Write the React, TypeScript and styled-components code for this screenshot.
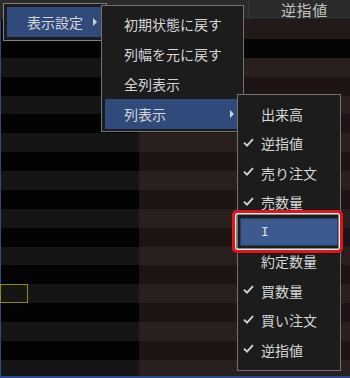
import styled, { createGlobalStyle } from "styled-components";

const GlobalStyle = createGlobalStyle`
  html, body {
    margin: 0;
    padding: 0;
    background: #000;
  }
  body {
    font-family: "Noto Sans CJK JP", "Noto Sans", sans-serif;
  }
`;

type Tone = "header" | "first" | "black" | "dark" | "light";

const ROW_COUNT = 19;

function rowTone(index: number): Tone {
  if (index === 0) return "first";
  if (index === 1) return "black";
  return index % 2 === 0 ? "light" : "dark";
}

const leftColors: Record<Tone, string> = {
  header: "#2b2b2b",
  first: "#0b0b0b",
  black: "#030303",
  dark: "#030303",
  light: "#151515",
};

const rightColors: Record<Tone, string> = {
  header: "#2b2b2b",
  first: "#221a19",
  black: "#050505",
  dark: "#1d1514",
  light: "#29201e",
};

const submenuItems = [
  { label: "出来高", checked: false },
  { label: "逆指値", checked: true },
  { label: "売り注文", checked: true },
  { label: "売数量", checked: true },
  { label: "I", checked: false, active: true },
  { label: "約定数量", checked: false },
  { label: "買数量", checked: true },
  { label: "買い注文", checked: true },
  { label: "逆指値", checked: true },
];

export default function App() {
  return (
    <>
      <GlobalStyle />
      <Screen>
        <HeaderRow>
          <HeaderCell $width={249} />
          <HeaderCell $width={101}>逆指値</HeaderCell>
        </HeaderRow>
        <Body>
          {Array.from({ length: ROW_COUNT }).map((_, i) => (
            <GridRow key={i}>
              <LeftCell $tone={rowTone(i)} />
              <RightCell $tone={rowTone(i)} />
            </GridRow>
          ))}
        </Body>

        <FocusCell />

        <RootMenu>
          <MenuItem $height={30} $active $indent={20}>
            <span>表示設定</span>
            <Arrow />
          </MenuItem>
        </RootMenu>

        <SettingsMenu>
          <MenuItem $height={30} $indent={19}>初期状態に戻す</MenuItem>
          <MenuItem $height={30} $indent={19}>列幅を元に戻す</MenuItem>
          <MenuItem $height={30} $indent={19}>全列表示</MenuItem>
          <MenuItem $height={30} $indent={19} $active>
            <span>列表示</span>
            <Arrow />
          </MenuItem>
        </SettingsMenu>

        <ColumnMenu>
          {submenuItems.map((item, i) => (
            <ColumnItem key={i} $active={item.active}>
              <CheckSlot>
                {item.checked && (
                  <svg width="11" height="9" viewBox="0 0 11 9">
                    <polyline
                      points="1,4.6 4,7.6 10,1.2"
                      fill="none"
                      stroke="#d2d2d2"
                      strokeWidth="1.9"
                    />
                  </svg>
                )}
              </CheckSlot>
              {item.active ? <CursorGlyph>{item.label}</CursorGlyph> : item.label}
            </ColumnItem>
          ))}
        </ColumnMenu>

        <Callout />
      </Screen>
    </>
  );
}

const Screen = styled.div`
  position: relative;
  width: 350px;
  height: 378px;
  overflow: hidden;
  display: flex;
  flex-direction: column;
  background: #000;
`;

const HeaderRow = styled.div`
  display: flex;
  height: 20px;
  flex-shrink: 0;
  background: #2b2b2b;
  border-bottom: 1px solid #1a1a1a;
  box-sizing: border-box;
`;

const HeaderCell = styled.div<{ $width: number }>`
  width: ${(p) => p.$width}px;
  flex-shrink: 0;
  border-right: 1px solid #3a3a3a;
  box-sizing: border-box;
  color: #c4c4c4;
  font-size: 15px;
  letter-spacing: 0.6px;
  line-height: 19px;
  padding-left: 32px;
  &:last-child {
    border-right: none;
  }
`;

const Body = styled.div`
  flex: 1;
  overflow: hidden;
  border-left: 1px solid #2b4c8a;
  border-bottom: 2px solid #2b4c8a;
`;

const GridRow = styled.div`
  display: grid;
  grid-template-columns: 138px 1fr;
  height: 18.875px;
`;

const LeftCell = styled.div<{ $tone: Tone }>`
  background: ${(p) => leftColors[p.$tone]};
`;

const RightCell = styled.div<{ $tone: Tone }>`
  background: ${(p) => rightColors[p.$tone]};
`;

const FocusCell = styled.div`
  position: absolute;
  left: 0;
  top: 284px;
  width: 28px;
  height: 19px;
  box-sizing: border-box;
  border: 1.5px solid #8c8c0c;
`;

const MenuPanel = styled.div`
  position: absolute;
  box-sizing: border-box;
  background: #1c1c1c;
  border: 1px solid #727272;
  color: #d6d6d6;
  font-size: 14px;
  display: flex;
  flex-direction: column;
`;

const RootMenu = styled(MenuPanel)`
  left: 3px;
  top: 3px;
  width: 104px;
  height: 38px;
  padding: 3px;
  border-color: #808080;
  z-index: 1;
`;

const SettingsMenu = styled(MenuPanel)`
  left: 101px;
  top: 5px;
  width: 143px;
  height: 127px;
  padding: 3px 3px 2px;
  z-index: 2;
`;

const ColumnMenu = styled(MenuPanel)`
  left: 237px;
  top: 94px;
  width: 104px;
  height: 277px;
  padding: 4px 1px;
  z-index: 3;
`;

const MenuItem = styled.div<{ $height: number; $active?: boolean; $indent: number }>`
  height: ${(p) => p.$height}px;
  flex-shrink: 0;
  display: flex;
  align-items: center;
  justify-content: space-between;
  padding: 0 6px 0 ${(p) => p.$indent}px;
  background: ${(p) => (p.$active ? "#2f4a7b" : "transparent")};
  white-space: nowrap;
`;

const Arrow = styled.span`
  width: 0;
  height: 0;
  border-left: 4px solid #d0d0d0;
  border-top: 4px solid transparent;
  border-bottom: 4px solid transparent;
`;

const ColumnItem = styled.div<{ $active?: boolean }>`
  height: 29.5px;
  flex-shrink: 0;
  display: flex;
  align-items: center;
  padding-left: 4px;
  white-space: nowrap;
  background: ${(p) => (p.$active ? "#3b5a8f" : "transparent")};
  box-shadow: ${(p) => (p.$active ? "inset 0 0 0 1.5px #1e1e1e" : "none")};
`;

const CheckSlot = styled.span`
  width: 18px;
  display: flex;
  align-items: center;
  margin-top: -2px;
`;

const CursorGlyph = styled.span`
  font-family: "DejaVu Sans Mono", monospace;
  font-size: 13px;
  color: #e0e0e0;
`;

const Callout = styled.div`
  position: absolute;
  left: 232px;
  top: 210px;
  width: 111px;
  height: 43px;
  box-sizing: border-box;
  border: 3px solid #e3141c;
  border-radius: 5px;
  box-shadow: inset 0 0 0 1.5px #f2f2f2;
  z-index: 4;
`;
